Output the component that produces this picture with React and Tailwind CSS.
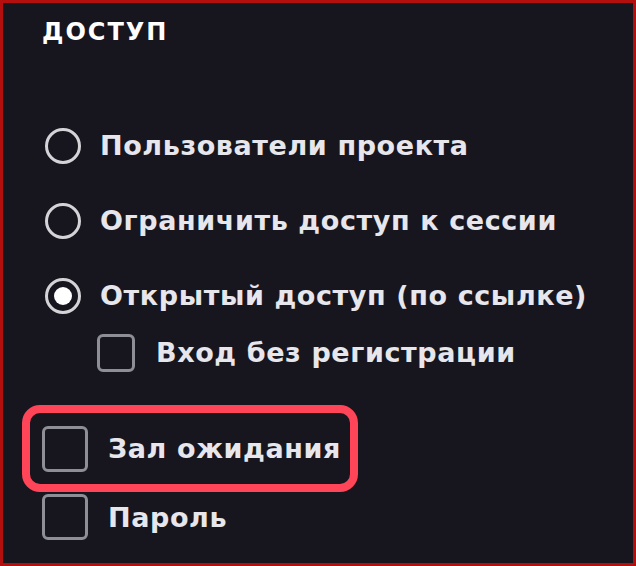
import React from "react";

function Radio({ checked }) {
  return (
    <div className="w-[36px] h-[36px] rounded-full border-[3px] border-[#d4d4d8] flex items-center justify-center shrink-0">
      {checked && <div className="w-[18px] h-[18px] rounded-full bg-white" />}
    </div>
  );
}

function Box({ size }) {
  return <div className={`${size} rounded-[6px] border-[3px] border-[#8e8e96] shrink-0`} />;
}

export default function App() {
  return (
    <div className="w-[636px] h-[566px] bg-[#17161e] border-[3px] border-[#b30f0f] box-border font-['DejaVu_Sans',sans-serif] font-bold text-[#e6e6ec] overflow-hidden">
      <div className="ml-[39px] mt-[17px] h-[24px] text-[24px] leading-[24px] font-extrabold tracking-[2px] text-white">
        ДОСТУП
      </div>
      <div className="mt-[64px] flex flex-col">
        {[
          ["Пользователи проекта", false],
          ["Ограничить доступ к сессии", false],
          ["Открытый доступ (по ссылке)", true],
        ].map(([t, c]) => (
          <div key={t} className="h-[75px] flex items-center pl-[42px]">
            <Radio checked={c} />
            <span className="ml-[19px] text-[27px] leading-none tracking-[0.6px]">{t}</span>
          </div>
        ))}
      </div>
      <div className="h-[39px] flex items-center pl-[94px]">
        <Box size="w-[38px] h-[38px]" />
        <span className="ml-[21px] text-[27px] leading-none tracking-[0.6px]">Вход без регистрации</span>
      </div>
      <div className="mt-[33px] ml-[19px] w-[336px] h-[87px] rounded-[18px] border-[8px] border-[#ff4557] flex items-center pl-[12px]">
        <Box size="w-[46px] h-[46px]" />
        <span className="ml-[20px] text-[27px] leading-none tracking-[0.6px]">Зал ожидания</span>
      </div>
      <div className="mt-[2px] ml-[39px] h-[46px] flex items-center">
        <Box size="w-[46px] h-[46px]" />
        <span className="ml-[20px] text-[27px] leading-none tracking-[0.6px]">Пароль</span>
      </div>
    </div>
  );
}
